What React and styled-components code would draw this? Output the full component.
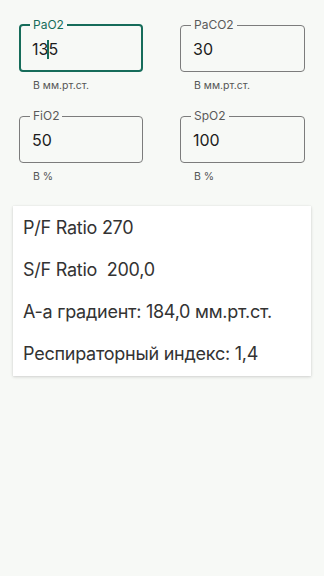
import styled, { createGlobalStyle } from 'styled-components';

const GlobalStyle = createGlobalStyle`
  html, body {
    margin: 0;
    padding: 0;
    background: #f7f9f6;
    font-family: Inter, "Noto Sans", sans-serif;
  }
`;

const Page = styled.div`
  min-height: 576px;
  background: #f7f9f6;
  padding: 19px 13px 0 13px;
  box-sizing: border-box;
`;

const Grid = styled.div`
  display: grid;
  grid-template-columns: 124px 125px;
  column-gap: 37px;
  row-gap: 18px;
  padding: 0 6px;
`;

const Field = styled.div`
  display: flex;
  flex-direction: column;
`;

const Box = styled.fieldset`
  margin: 0;
  height: 53px;
  box-sizing: border-box;
  padding: 0 ${(p) => (p.$focused ? '12px' : '13px')};
  border: ${(p) => (p.$focused ? '2px solid #166c5a' : '1px solid #7c7c7c')};
  border-radius: 4px;
`;

const Legend = styled.legend`
  padding: 0 3px;
  margin-left: -3px;
  font-size: 12px;
  line-height: 12px;
  color: ${(p) => (p.$focused ? '#166c5a' : '#5a5a5a')};
`;

const Value = styled.div`
  font-size: 16px;
  line-height: 20px;
  margin-top: 8px;
  margin-left: -1px;
  color: #1d1d1d;
  display: flex;
  align-items: center;
`;

const Caret = styled.span`
  display: inline-block;
  width: 2px;
  height: 19px;
  background: #166c5a;
  margin: 0 -1px;
`;

const Helper = styled.div`
  font-size: 10.5px;
  line-height: 13px;
  color: #555;
  padding-left: 14px;
  margin-top: 7px;
`;

const Card = styled.div`
  margin-top: 23px;
  background: #fff;
  box-shadow: 0 1px 3px rgba(0, 0, 0, 0.16), 0 0 1px rgba(0, 0, 0, 0.08);
  padding: 1px 10px 1px;
  display: flex;
  flex-direction: column;
`;

const Line = styled.div`
  font-size: 18px;
  line-height: 42px;
  letter-spacing: -0.25px;
  color: #333;
  white-space: pre;
`;

function InputField({ label, value, helper, focused }) {
  return (
    <Field>
      <Box $focused={focused}>
        <Legend $focused={focused}>{label}</Legend>
        <Value>{value}</Value>
      </Box>
      <Helper>{helper}</Helper>
    </Field>
  );
}

export default function App() {
  return (
    <Page>
      <GlobalStyle />
      <Grid>
        <InputField
          label="PaO2"
          focused
          value={<>13<Caret />5</>}
          helper="В мм.рт.ст."
        />
        <InputField label="PaCO2" value="30" helper="В мм.рт.ст." />
        <InputField label="FiO2" value="50" helper="В %" />
        <InputField label="SpO2" value="100" helper="В %" />
      </Grid>
      <Card>
        <Line>P/F Ratio 270</Line>
        <Line>S/F Ratio  200,0</Line>
        <Line>A-a градиент: 184,0 мм.рт.ст.</Line>
        <Line>Респираторный индекс: 1,4</Line>
      </Card>
    </Page>
  );
}
